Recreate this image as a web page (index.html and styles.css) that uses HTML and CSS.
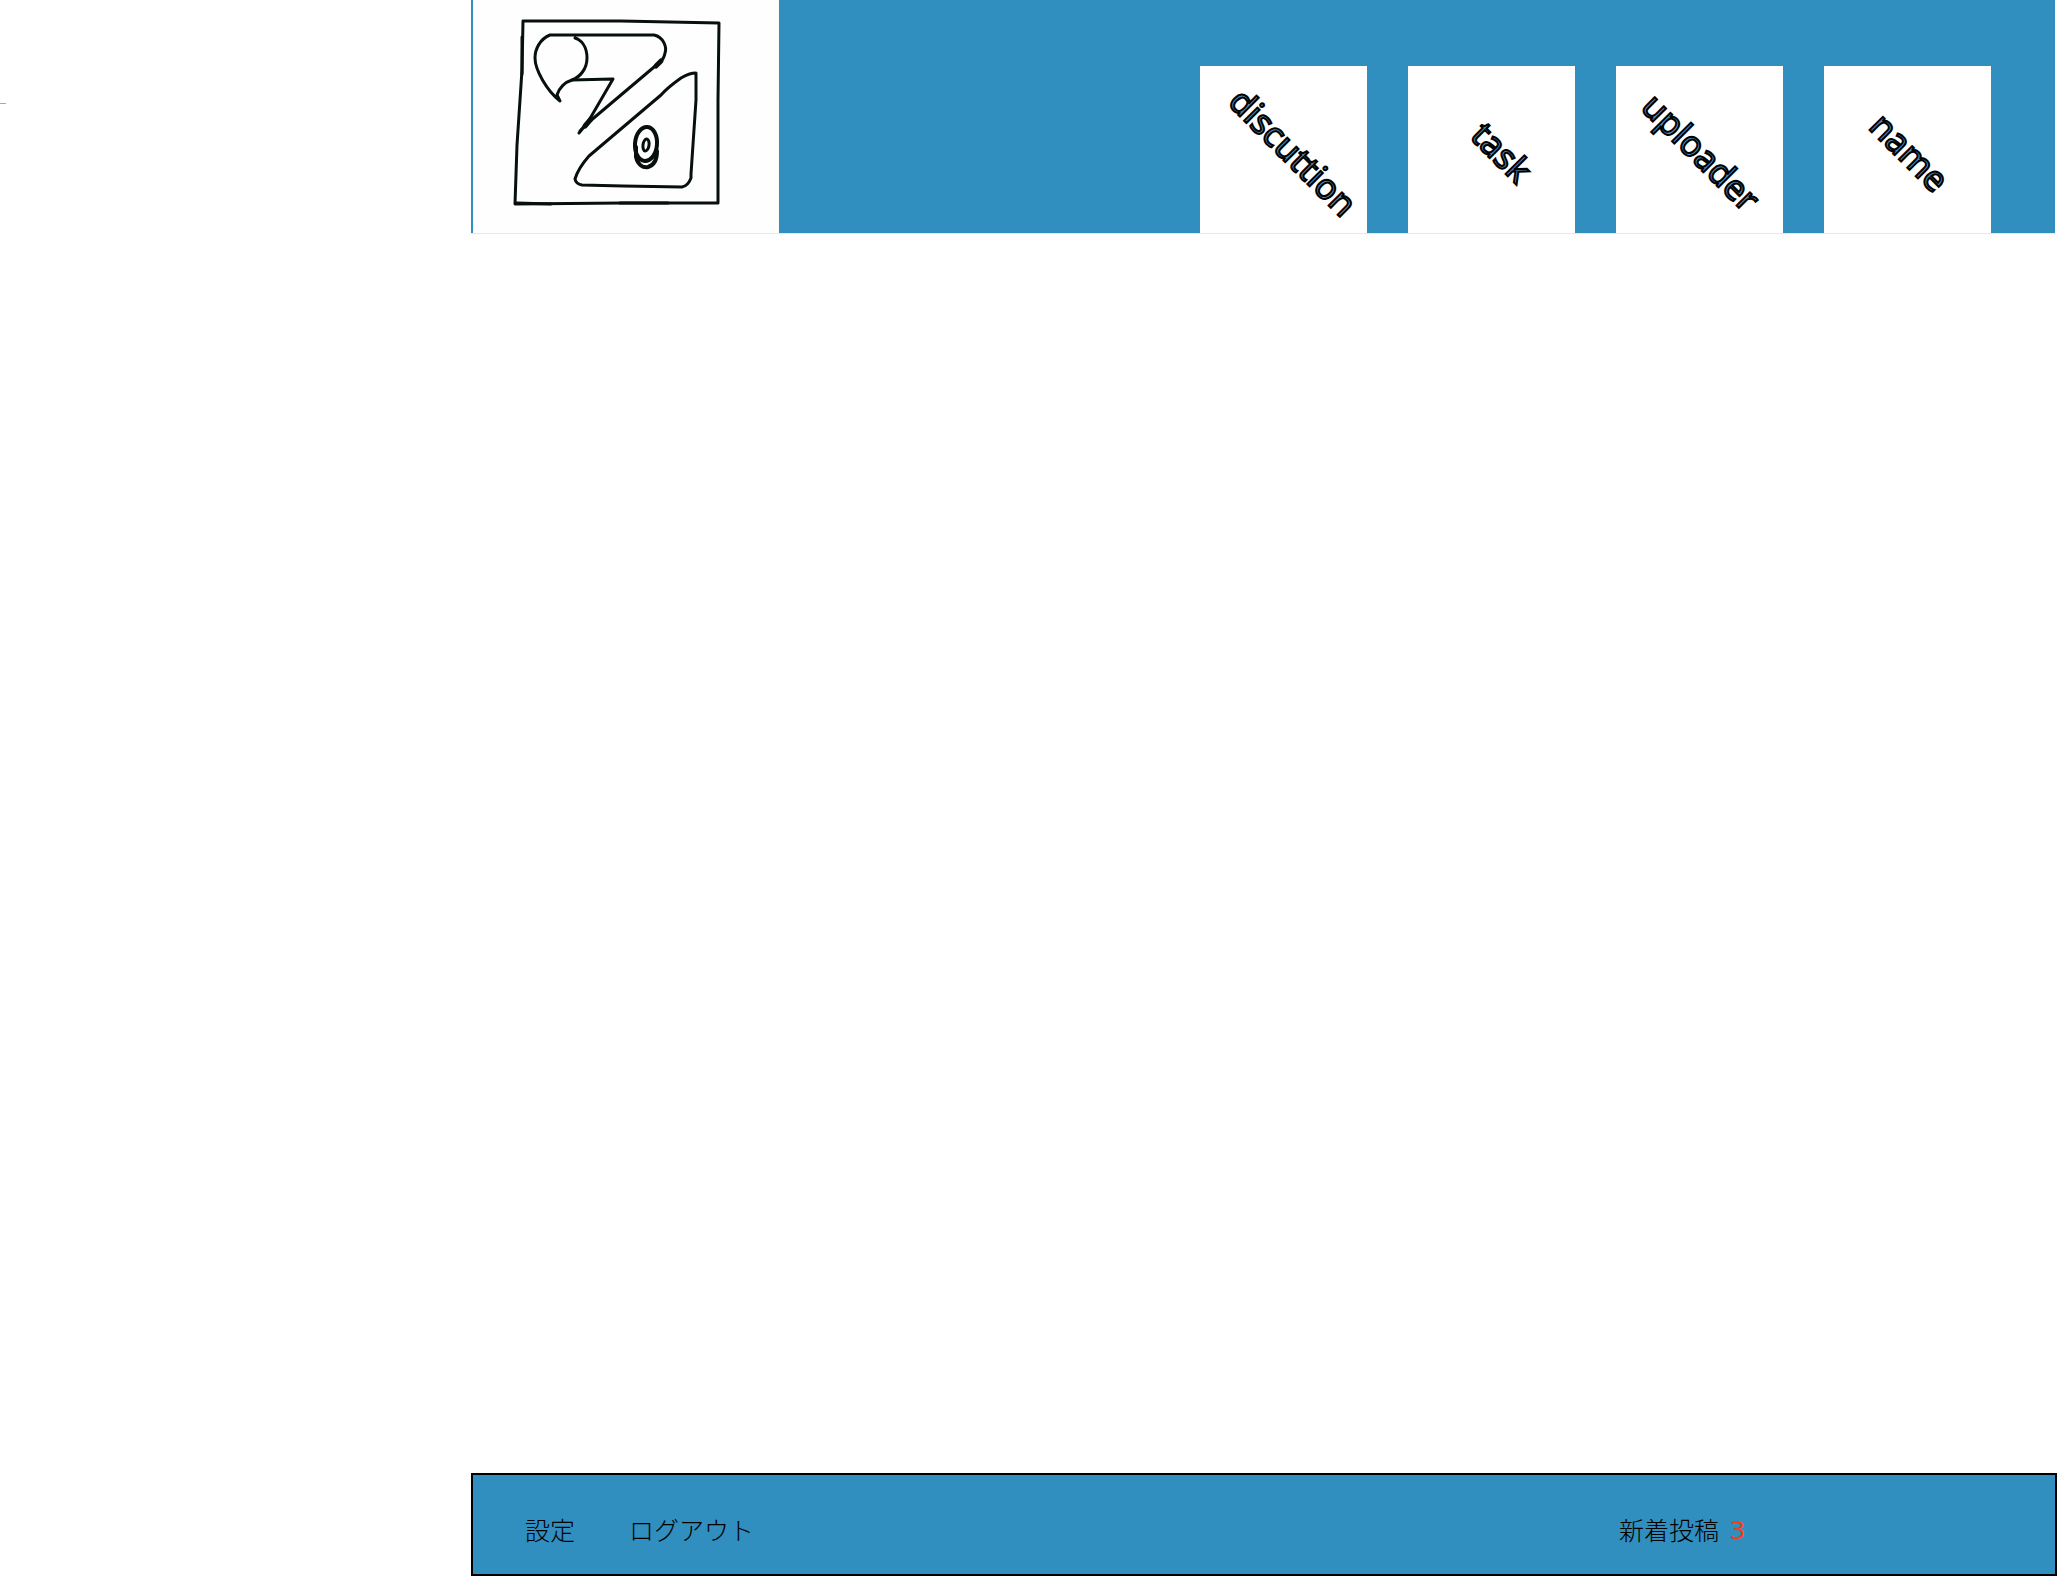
FILE: index.html
```html
<!DOCTYPE html>
<html lang="ja">
<head>
<meta charset="utf-8">
<title>discuttion</title>
<link rel="stylesheet" href="styles.css">
</head>
<body>
<aside class="side"><hr class="side-mark"></aside>
<div class="page">
  <header class="header">
    <a class="logo" href="#" aria-label="home">
      <svg viewBox="0 0 306 233" fill="none" stroke="#07100d" stroke-width="3" stroke-linecap="round" stroke-linejoin="round">
        <path d="M50 21 L148 21 L246 23 L245 100 L245 203 L150 203 L42 204 L44 145 L49 70 Z"/>
        <path d="M49 37 L49 74 M44 203 L78 204 M147 203 L195 203"/>
        <path d="M102 38 C108 40 114 46 114 58 C114 69 107 77 99 80 C92 82 86 88 84 95 L87 101 C74 91 62 70 62 58 C62 49 67 39 77 35 L181 35 C191 37 194 48 192 53 Q191 59 187 62 L116 122"/>
        <path d="M99 80 L140 79 L115 122 L106 133 M116 121 L107 131"/>
        <path d="M112 126 L118 119 M183 66 L188 61" stroke-width="5"/>
        <path d="M223 73 Q216 73 208 78 Q194 88 188 95 L116 156 C109 164 104 172 102 179 Q103 184 109 185 L150 186 L209 187 Q215 186 218 178 L218 174 L223 100 Z"/>
        <ellipse cx="173" cy="144" rx="11" ry="17" transform="rotate(5 173 144)" stroke-width="4"/>
        <path d="M163 147 L163 157 C165 165 170 168 175 167 C182 165 184 159 184 151" stroke-width="4"/>
        <ellipse cx="173" cy="145" rx="3" ry="6" transform="rotate(8 173 145)"/>
      </svg>
    </a>
    <nav class="tabs">
      <a class="tab tab-shifted" href="#"><span class="tab-label">discuttion</span></a>
      <a class="tab tab-shifted" href="#"><span class="tab-label">task</span></a>
      <a class="tab" href="#"><span class="tab-label">uploader</span></a>
      <a class="tab" href="#"><span class="tab-label">name</span></a>
    </nav>
  </header>
  <main class="content"></main>
  <footer class="footer">
    <nav class="footer-links">
      <a href="#">設定</a>
      <a href="#">ログアウト</a>
    </nav>
    <a class="news" href="#">新着投稿<span class="count">3</span></a>
  </footer>
</div>
</body>
</html>
```
FILE: styles.css
```css
* { box-sizing: border-box; }

body {
  margin: 0;
  min-height: 100vh;
  display: grid;
  grid-template-columns: 471px 1fr;
  background: #fff;
  color: #000;
  font-family: "Noto Sans", "Noto Sans CJK JP", sans-serif;
}

a { color: inherit; text-decoration: none; }

.side { padding-top: 103px; }

.side-mark {
  width: 6px;
  height: 1px;
  margin: 0;
  border: 0;
  background: #aaa;
}

.page {
  display: flex;
  flex-direction: column;
  min-height: 100vh;
}

.header {
  display: flex;
  justify-content: space-between;
  align-items: flex-end;
  height: 234px;
  margin-right: 2px;
  padding: 0 64px 0 2px;
  background: #308fbe;
  border-bottom: 1px solid #dde9f3;
}

.logo {
  width: 306px;
  height: 233px;
  background: #fefefe;
}

.logo svg { display: block; width: 100%; height: 100%; }

.tabs { display: flex; gap: 41px; }

.tab {
  display: flex;
  align-items: center;
  justify-content: center;
  width: 167px;
  height: 167px;
  padding: 4px 0 0 4px;
  background: #fff;
}

.tab-shifted { padding-left: 20px; }

.tab-label {
  font-size: 35px;
  line-height: 40px;
  color: #5291bd;
  -webkit-text-stroke: 2px #000;
  transform: rotate(45deg);
}

.content { flex: 1; }

.footer {
  display: flex;
  justify-content: space-between;
  align-items: center;
  height: 103px;
  padding: 8px 310px 0 52px;
  background: #308fbe;
  border: 2px solid #000;
  font-family: "Noto Sans CJK JP", sans-serif;
  font-size: 25px;
  font-weight: 300;
  line-height: 36px;
}

.footer-links { display: flex; gap: 54px; }

.news { display: flex; gap: 11px; }

.count {
  color: #fa3c14;
  font-family: "Noto Sans", sans-serif;
  font-size: 26px;
  font-weight: 400;
}
```
